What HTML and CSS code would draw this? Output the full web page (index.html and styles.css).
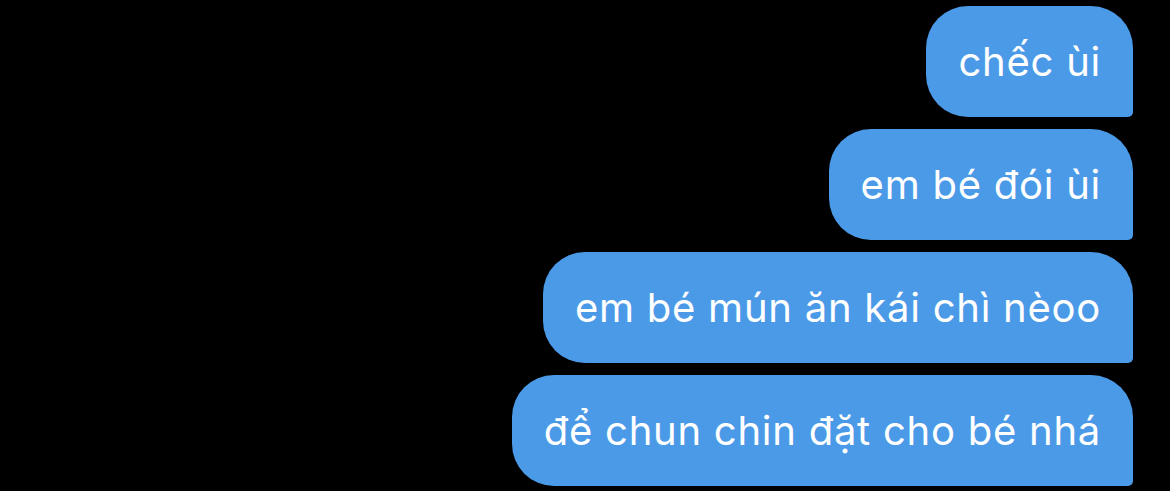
FILE: index.html
```html
<!DOCTYPE html>
<html lang="vi">
<head>
  <meta charset="UTF-8">
  <meta name="viewport" content="width=device-width, initial-scale=1.0">
  <title>Tin nhắn</title>
  <link rel="stylesheet" href="styles.css">
</head>
<body>
  <div class="thread">
    <div class="bubble">chếc ùi</div>
    <div class="bubble">em bé đói ùi</div>
    <div class="bubble">em bé mún ăn kái chì nèoo</div>
    <div class="bubble">để chun chin đặt cho bé nhá</div>
  </div>
</body>
</html>
```

FILE: styles.css
```css
body {
  margin: 0;
  background: #000000;
  font-family: Inter, "Noto Sans", sans-serif;
  height: 100vh;
}

.thread {
  display: flex;
  flex-direction: column;
  align-items: flex-end;
  gap: 12px;
  padding: 6px 37px 0 0;
}

.bubble {
  background: #4b9ae8;
  color: #ffffff;
  font-size: 40px;
  letter-spacing: 0.75px;
  height: 111px;
  box-sizing: border-box;
  padding: 0 32px 0 32px;
  display: flex;
  align-items: center;
  border-radius: 42px 42px 5px 42px;
}
```
